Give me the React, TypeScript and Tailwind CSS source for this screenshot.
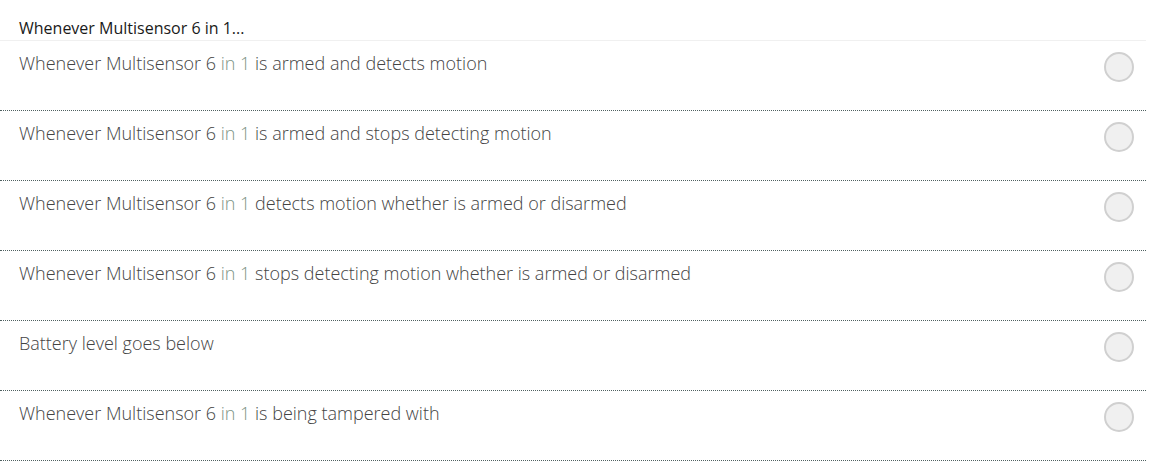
import React from "react";

const rows: { pre: string; link?: string; post?: string }[] = [
  { pre: "Whenever Multisensor 6 ", link: "in 1", post: " is armed and detects motion" },
  { pre: "Whenever Multisensor 6 ", link: "in 1", post: " is armed and stops detecting motion" },
  { pre: "Whenever Multisensor 6 ", link: "in 1", post: " detects motion whether is armed or disarmed" },
  { pre: "Whenever Multisensor 6 ", link: "in 1", post: " stops detecting motion whether is armed or disarmed" },
  { pre: "Battery level goes below" },
  { pre: "Whenever Multisensor 6 ", link: "in 1", post: " is being tampered with" },
];

export default function App() {
  return (
    <div
      className="w-[1146px] bg-white"
      style={{ fontFamily: '"Open Sans", "Liberation Sans", sans-serif' }}
    >
      <div className="h-[41px] border-b border-[#f0f0f0] pl-[19px] pt-[16px] text-[16px] leading-[24px] text-[#1a1a1a]">
        Whenever Multisensor 6 in 1...
      </div>
      {rows.map((r, i) => (
        <div
          key={i}
          className="flex h-[70px] items-start justify-between border-b border-dotted border-[#4f6060] pl-[19px] pr-[12px]"
        >
          <div className="pt-[10px] text-[18px] font-light leading-[24px] text-[#444]">
            {r.pre}
            {r.link && <span className="text-[#7d9486]">{r.link}</span>}
            {r.post}
          </div>
          <div className="mt-[11px] h-[30px] w-[30px] rounded-full border-2 border-[#d0d0d0] bg-[#f0f0f0]" />
        </div>
      ))}
    </div>
  );
}
